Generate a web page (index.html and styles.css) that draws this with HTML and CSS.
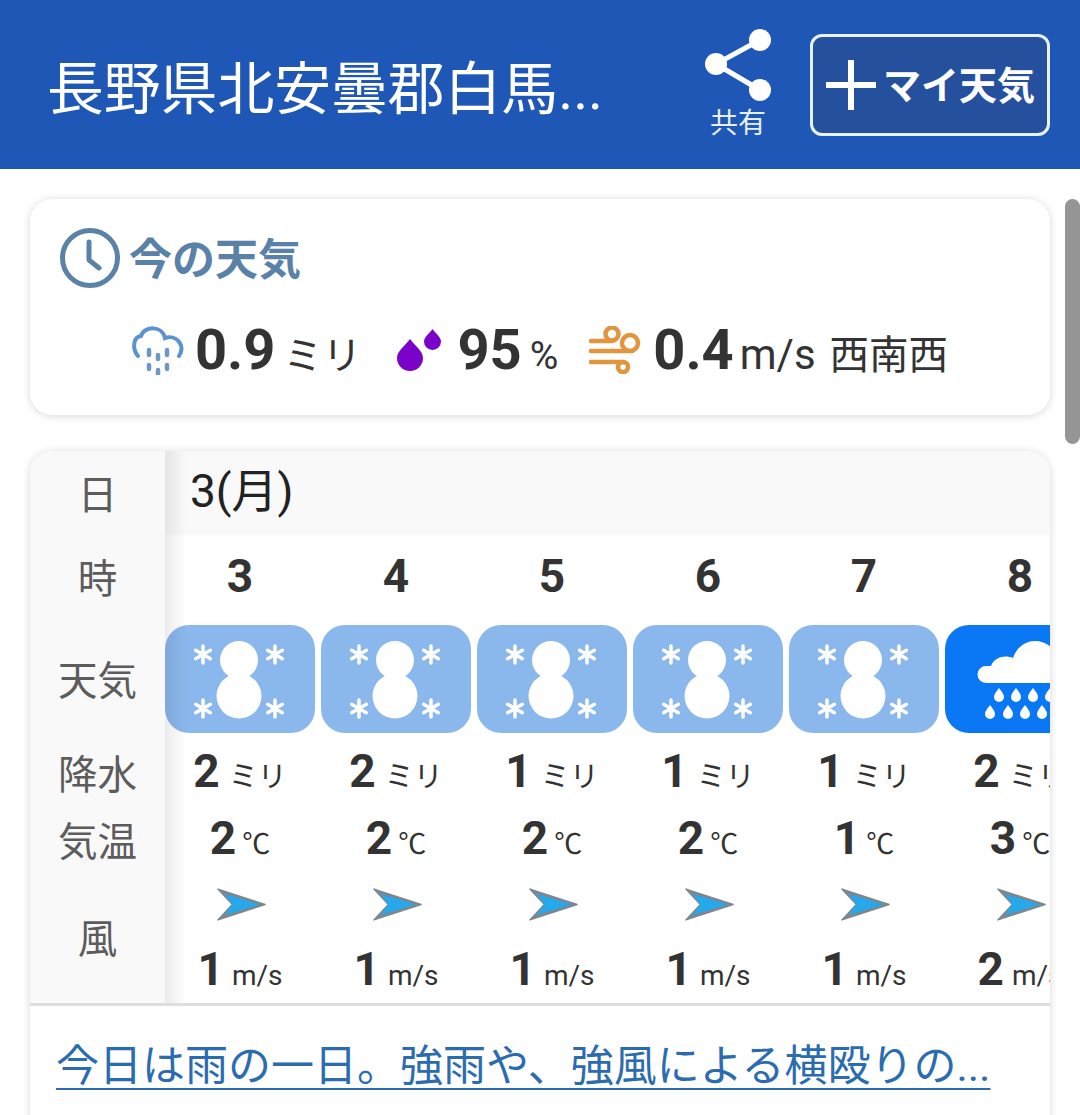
FILE: index.html
```html
<!DOCTYPE html>
<html lang="ja">
<head>
<meta charset="utf-8">
<title>今の天気</title>
<link rel="stylesheet" href="styles.css">
</head>
<body>
<svg class="defs" width="0" height="0" aria-hidden="true">
  <defs>
    <g id="snow">
      <circle cx="74" cy="35" r="19" fill="#fff"/>
      <circle cx="74" cy="71" r="22.500" fill="#fff"/>
      <g stroke="#fff" stroke-width="3.500" stroke-linecap="round">
        <path d="M38 21v17M30.600 25.250l14.800 8.500M30.600 33.750l14.800-8.500"/>
        <path d="M110 21v17M102.600 25.250l14.800 8.500M102.600 33.750l14.800-8.500"/>
        <path d="M38 75v17M30.600 79.250l14.800 8.500M30.600 87.750l14.800-8.500"/>
        <path d="M110 75v17M102.600 79.250l14.800 8.500M102.600 87.750l14.800-8.500"/>
      </g>
    </g>
    <g id="arrow">
      <path d="M2 1L51 17L2 33L17 17Z" fill="#7d8790" stroke="#7d8790" stroke-width="1.500" stroke-linejoin="round"/>
      <path d="M9 6L46 17L9 28L17 17Z" fill="#25a9ec"/>
    </g>
  </defs>
</svg>

<header class="topbar">
  <h1 class="place">長野県北安曇郡白馬...</h1>
  <div class="share">
    <svg class="share-icon" viewBox="0 0 66 72">
      <path d="M55 12L11 36L55 62" fill="none" stroke="#fff" stroke-width="5"/>
      <circle cx="55" cy="12" r="11" fill="#fff"/>
      <circle cx="11" cy="36" r="11" fill="#fff"/>
      <circle cx="55" cy="62" r="11" fill="#fff"/>
    </svg>
    <span class="share-label">共有</span>
  </div>
  <button class="my-btn" type="button">
    <svg class="plus" viewBox="0 0 50 50"><path d="M25 1v48M1 25h48" stroke="#fff" stroke-width="6" stroke-linecap="round"/></svg>
    <span class="my-label">マイ天気</span>
  </button>
</header>

<main class="content">
  <section class="card now">
    <h2 class="now-title">
      <svg class="clock" viewBox="0 0 60 60">
        <circle cx="30" cy="30" r="27.500" fill="none" stroke="#5a82a8" stroke-width="5"/>
        <path d="M29 14v18l10 8" fill="none" stroke="#5a82a8" stroke-width="5" stroke-linecap="round" stroke-linejoin="round"/>
      </svg>
      <span class="now-title-text">今の天気</span>
    </h2>
    <div class="now-values">
      <svg class="now-rain" viewBox="0 0 52 50">
        <path d="M6 31C0 24 1 12 9 11C12 1 30 0 33 13C44 9 54 20 47 31" fill="none" stroke="#5b93d2" stroke-width="4" stroke-linecap="round"/>
        <path d="M17 25v5M26 30v4M35 25v5M17 40v4M26 45v4M35 40v4" stroke="#6f97c1" stroke-width="4.500" stroke-linecap="round"/>
      </svg>
      <span class="now-num">0.9</span><span class="now-unit mm">ミリ</span>
      <svg class="now-drop" viewBox="0 0 44 42">
        <path d="M13 10C18 17 26 22 26 29A13 13 0 0 1 0 29C0 22 8 17 13 10Z" fill="#7a02c9"/>
        <path d="M35.500 0C38 4 44 8 44 12.500A8.500 8.500 0 0 1 27 12.500C27 8 33 4 35.500 0Z" fill="#7a02c9"/>
      </svg>
      <span class="now-num">95</span><span class="now-unit pct">%</span>
      <svg class="now-wind" viewBox="0 0 52 48">
        <g fill="none" stroke="#e0953f" stroke-width="4.500" stroke-linecap="round">
          <path d="M2 15H23"/><circle cx="23" cy="8" r="6.500"/>
          <path d="M2 25H41"/><circle cx="41" cy="17" r="8"/>
          <path d="M2 36H34"/><circle cx="34" cy="41" r="5"/>
        </g>
      </svg>
      <span class="now-num">0.4</span><span class="now-unit ms">m/s</span><span class="now-dir">西南西</span>
    </div>
  </section>

  <section class="card forecast">
    <div class="table">
      <div class="labels">
        <div class="row-date">日</div>
        <div class="row-hour">時</div>
        <div class="row-icon">天気</div>
        <div class="row-rain">降水</div>
        <div class="row-temp">気温</div>
        <div class="row-wind">風</div>
      </div>
      <div class="scroll">
        <div class="date-cell row-date">3(月)</div>
        <div class="cols">
          <div class="col">
            <div class="row-hour hour">3</div>
            <div class="row-icon"><svg class="wx snowy" viewBox="0 0 150 108"><use href="#snow"/></svg></div>
            <div class="row-rain val"><b>2</b><span class="mm-s">ミリ</span></div>
            <div class="row-temp val"><b>2</b><span class="deg">℃</span></div>
            <div class="row-wind wind"><svg class="arrow" viewBox="0 0 52 34"><use href="#arrow"/></svg><div class="val"><b>1</b><span class="speed">m/s</span></div></div>
          </div>
          <div class="col">
            <div class="row-hour hour">4</div>
            <div class="row-icon"><svg class="wx snowy" viewBox="0 0 150 108"><use href="#snow"/></svg></div>
            <div class="row-rain val"><b>2</b><span class="mm-s">ミリ</span></div>
            <div class="row-temp val"><b>2</b><span class="deg">℃</span></div>
            <div class="row-wind wind"><svg class="arrow" viewBox="0 0 52 34"><use href="#arrow"/></svg><div class="val"><b>1</b><span class="speed">m/s</span></div></div>
          </div>
          <div class="col">
            <div class="row-hour hour">5</div>
            <div class="row-icon"><svg class="wx snowy" viewBox="0 0 150 108"><use href="#snow"/></svg></div>
            <div class="row-rain val"><b>1</b><span class="mm-s">ミリ</span></div>
            <div class="row-temp val"><b>2</b><span class="deg">℃</span></div>
            <div class="row-wind wind"><svg class="arrow" viewBox="0 0 52 34"><use href="#arrow"/></svg><div class="val"><b>1</b><span class="speed">m/s</span></div></div>
          </div>
          <div class="col">
            <div class="row-hour hour">6</div>
            <div class="row-icon"><svg class="wx snowy" viewBox="0 0 150 108"><use href="#snow"/></svg></div>
            <div class="row-rain val"><b>1</b><span class="mm-s">ミリ</span></div>
            <div class="row-temp val"><b>2</b><span class="deg">℃</span></div>
            <div class="row-wind wind"><svg class="arrow" viewBox="0 0 52 34"><use href="#arrow"/></svg><div class="val"><b>1</b><span class="speed">m/s</span></div></div>
          </div>
          <div class="col">
            <div class="row-hour hour">7</div>
            <div class="row-icon"><svg class="wx snowy" viewBox="0 0 150 108"><use href="#snow"/></svg></div>
            <div class="row-rain val"><b>1</b><span class="mm-s">ミリ</span></div>
            <div class="row-temp val"><b>1</b><span class="deg">℃</span></div>
            <div class="row-wind wind"><svg class="arrow" viewBox="0 0 52 34"><use href="#arrow"/></svg><div class="val"><b>1</b><span class="speed">m/s</span></div></div>
          </div>
          <div class="col">
            <div class="row-hour hour">8</div>
            <div class="row-icon"><svg class="wx rainy" viewBox="0 0 150 108">
              <path d="M41 58A8.500 8.500 0 0 1 41 41C45 41 46 41 46 41C50 31 61 30 68 33C72 21 82 16 90 16C102 16 112 25 113 36C122 36 128 40 130 49C130 55 126 58 122 58Z" fill="#fff"/>
              <g fill="#fff">
                <path d="M54 63c3 4 5 6 5 9a5 5 0 0 1-10 0c0-3 2-5 5-9Z"/>
                <path d="M71 63c3 4 5 6 5 9a5 5 0 0 1-10 0c0-3 2-5 5-9Z"/>
                <path d="M88 63c3 4 5 6 5 9a5 5 0 0 1-10 0c0-3 2-5 5-9Z"/>
                <path d="M105 63c3 4 5 6 5 9a5 5 0 0 1-10 0c0-3 2-5 5-9Z"/>
                <path d="M45 80c3 4 5 6 5 9a5 5 0 0 1-10 0c0-3 2-5 5-9Z"/>
                <path d="M63 80c3 4 5 6 5 9a5 5 0 0 1-10 0c0-3 2-5 5-9Z"/>
                <path d="M80 80c3 4 5 6 5 9a5 5 0 0 1-10 0c0-3 2-5 5-9Z"/>
                <path d="M97 80c3 4 5 6 5 9a5 5 0 0 1-10 0c0-3 2-5 5-9Z"/>
              </g>
            </svg></div>
            <div class="row-rain val"><b>2</b><span class="mm-s">ミリ</span></div>
            <div class="row-temp val"><b>3</b><span class="deg">℃</span></div>
            <div class="row-wind wind"><svg class="arrow" viewBox="0 0 52 34"><use href="#arrow"/></svg><div class="val"><b>2</b><span class="speed">m/s</span></div></div>
          </div>
        </div>
        <div class="edge-shade"></div>
      </div>
    </div>
    <div class="summary"><a class="summary-link" href="#">今日は雨の一日。強雨や、強風による横殴りの...</a></div>
  </section>
</main>
<div class="scrollbar"></div>
</body>
</html>
```
FILE: styles.css
```css
* { box-sizing: border-box; }
html, body { margin: 0; height: 1115px; overflow: hidden; }
body {
  position: relative;
  background: #fff;
  color: #333;
  font-family: Roboto, "Noto Sans CJK JP", sans-serif;
}
.defs { position: absolute; }

.topbar {
  height: 169px;
  background: #1f57b7;
  display: flex;
  align-items: center;
  padding: 0 30px 0 47px;
  color: #fff;
}
.place {
  flex: 1;
  margin: 12px 0 0;
  font-size: 56.800px;
  font-weight: 400;
  line-height: 1;
  white-space: nowrap;
}
.share {
  width: 66px;
  display: flex;
  flex-direction: column;
  align-items: center;
  margin-right: 39px;
  margin-top: -2px;
}
.share-icon { width: 66px; height: 74px; display: block; margin-bottom: 6px; }
.share-label { font-size: 28px; line-height: 34px; color: #e6eef8; }
.my-btn {
  width: 240px;
  height: 102px;
  margin-top: 1px;
  border: 3px solid #e6f3fb;
  border-radius: 12px;
  background: #24509e;
  color: #fff;
  display: flex;
  align-items: center;
  gap: 7px;
  padding: 0 0 0 13px;
  font-family: inherit;
  font-size: 38px;
  font-weight: 700;
  white-space: nowrap;
}
.my-label { margin-bottom: 6px; }
.plus { width: 50px; height: 50px; flex: none; }

.content {
  padding: 30px;
  display: flex;
  flex-direction: column;
  gap: 36px;
}
.card {
  background: #fff;
  border-radius: 22px;
  box-shadow: 0 1px 8px rgba(0, 0, 0, .16);
  overflow: hidden;
}
.now { height: 216px; padding: 29px 30px 0; }
.now-title {
  margin: 0;
  display: flex;
  align-items: center;
  gap: 9px;
  height: 60px;
  font-size: 43px;
  font-weight: 700;
  color: #5a82a8;
}
.now-title-text { margin-bottom: 4px; }
.clock { width: 60px; height: 60px; flex: none; }
.now-values {
  display: flex;
  align-items: baseline;
  justify-content: center;
  margin-top: 27px;
  height: 70px;
}
.now-rain { width: 52px; height: 50px; align-self: center; margin-right: 11px; }
.now-drop { width: 44px; height: 42px; align-self: center; margin: 0 16px 0 36px; }
.now-wind { width: 52px; height: 48px; align-self: center; margin: 0 12px 0 31px; }
.now-num { font-size: 56px; font-weight: 700; line-height: 70px; }
.now-unit, .now-dir { font-size: 39px; font-weight: 400; margin-left: 8px; }
.now-dir { margin-left: 14px; font-size: 39.500px; }
.ms { font-size: 42px; margin-left: 6px; }

.forecast { height: 700px; }
.table { display: flex; border-bottom: 3px solid #dedede; }
.labels {
  width: 135px;
  flex: none;
  background: #f9f9f9;
  font-size: 39.500px;
  color: #5c5c5c;
}
.labels > div { display: flex; align-items: center; justify-content: center; padding-bottom: 4px; }
.labels > .row-rain, .labels > .row-temp { padding-bottom: 0; }
.row-date { height: 84px; }
.row-hour { height: 85px; }
.row-icon { height: 118px; }
.row-rain { height: 67px; }
.row-temp { height: 67px; }
.row-wind { height: 131px; }

.scroll { flex: 1; min-width: 0; position: relative; overflow: hidden; }
.date-cell {
  background: #f9f9f9;
  padding-left: 25px;
  font-size: 46px;
  line-height: 80px;
  color: #222;
}
.cols { display: flex; gap: 6px; }
.col { width: 150px; flex: none; }
.hour {
  display: flex;
  align-items: center;
  justify-content: center;
  font-size: 46px;
  font-weight: 700;
  padding-bottom: 4px;
}
.row-icon { display: flex; align-items: center; }
.wx { width: 150px; height: 108px; display: block; border-radius: 24px; }
.snowy { background: #8ab7ec; }
.rainy { background: #0a78f5; }
.val {
  display: flex;
  align-items: baseline;
  justify-content: center;
  color: #333;
  white-space: nowrap;
}
.val b { font-size: 46px; font-weight: 700; line-height: 67px; }
.mm-s { font-size: 29px; margin-left: 9px; }
.deg { font-size: 28px; margin-left: 6px; }
.speed { font-size: 28px; margin-left: 8px; font-weight: 400; }
.wind { display: flex; flex-direction: column; align-items: center; padding-top: 16px; }
.arrow { width: 50px; height: 33px; display: block; margin: 0 0 15px 2px; }
.edge-shade {
  position: absolute;
  left: 0;
  top: 0;
  bottom: 0;
  width: 22px;
  background: linear-gradient(to right, rgba(0, 0, 0, .08), rgba(0, 0, 0, 0));
  pointer-events: none;
}
.summary { padding: 30px 26px; }
.summary-link {
  font-size: 43px;
  line-height: 60px;
  color: #2b6cb0;
  white-space: nowrap;
  text-decoration-thickness: 2px;
  text-underline-offset: 7px;
}
.scrollbar {
  position: absolute;
  left: 1065px;
  top: 199px;
  width: 15px;
  height: 245px;
  border-radius: 8px;
  background: #959595;
}
```
